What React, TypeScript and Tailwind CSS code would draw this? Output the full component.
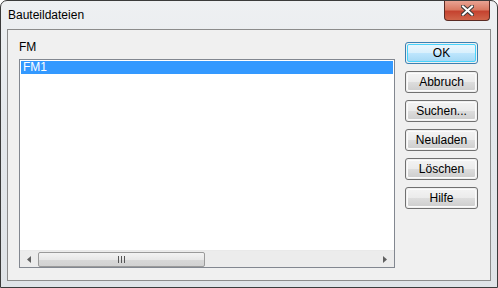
import React from "react";

const font = { fontFamily: '"Liberation Sans", Arial, sans-serif' };

function Btn({ label, def }: { label: string; def?: boolean }) {
  return (
    <div
      className={
        "h-[22px] w-[73px] rounded-[3px] border p-[1px] " +
        (def ? "border-[#3c7fb1]" : "border-[#707070]")
      }
    >
      <div
        className={
          "flex h-full w-full items-center justify-center rounded-[2px] text-[12px] leading-none text-black " +
          (def
            ? "border border-[#48d3fb] bg-[linear-gradient(#eaf6fd_0%,#d9f0fc_50%,#bee6fd_51%,#a7d9f5_100%)]"
            : "border border-[#fbfbfb] bg-[linear-gradient(#f2f2f2_0%,#ebebeb_50%,#dddddd_51%,#cfcfcf_100%)]")
        }
      >
        {label}
      </div>
    </div>
  );
}

export default function App() {
  return (
    <div className="w-[498px] h-[288px] bg-white" style={font}>
      <div className="flex h-full w-full flex-col rounded-t-[7px] border border-[#3b3b3b] bg-[linear-gradient(180deg,#eef0f2_0%,#e4e8ec_40%,#dfe3e7_100%)]">
        {/* title bar */}
        <div className="flex h-[28px] items-start">
          <div className="pl-[7px] pt-[7px] text-[12px] leading-[15px] text-black">Bauteildateien</div>
          <div className="ml-auto mr-[7px] flex h-[20px] w-[46px] items-center justify-center rounded-b-[4px] border border-t-0 border-[#5a2b24] bg-[linear-gradient(#e8a393_0%,#d97a63_45%,#c54330_55%,#d0654a_100%)]">
            <svg width="13" height="11" viewBox="0 0 13 11">
              <path
                d="M2 1.5 L11 9.5 M11 1.5 L2 9.5"
                stroke="#3a3a3a"
                strokeWidth="4"
                strokeLinecap="square"
              />
              <path
                d="M2 1.5 L11 9.5 M11 1.5 L2 9.5"
                stroke="#ffffff"
                strokeWidth="2"
                strokeLinecap="square"
              />
            </svg>
          </div>
        </div>
        {/* client */}
        <div className="mx-[6px] mb-[6px] flex flex-1 border border-[#8b8b8b] bg-[#f0f0f0]">
          <div className="flex flex-1 flex-col pl-[11px] pt-[10px] pb-[12px]">
            <div className="h-[15px] text-[12px] leading-[15px] text-black">FM</div>
            <div className="mt-[4px] flex flex-1 flex-col border border-[#828790] bg-white">
              <div className="flex flex-1 flex-col p-[1px]">
                <div className="h-[13px] bg-[#3399ff] pl-[2px] text-[12px] leading-[13px] text-white">FM1</div>
              </div>
              {/* scrollbar */}
              <div className="flex h-[17px] items-center border-t border-[#e9e9e9] bg-[#ececec]">
                <div className="flex h-full w-[18px] items-center justify-center">
                  <svg width="4" height="7" viewBox="0 0 4 7">
                    <path d="M4 0 L0 3.5 L4 7 Z" fill="#606060" />
                  </svg>
                </div>
                <div className="flex h-[15px] w-[167px] items-center justify-center rounded-[2px] border border-[#9a9a9a] bg-[linear-gradient(#f3f3f3_0%,#e8e8e8_50%,#d8d8d8_51%,#d2d2d2_100%)]">
                  <svg width="8" height="7" viewBox="0 0 8 7">
                    <path d="M0.5 0 V7 M3.5 0 V7 M6.5 0 V7" stroke="#555" strokeWidth="1" />
                  </svg>
                </div>
                <div className="flex-1" />
                <div className="flex h-full w-[18px] items-center justify-center">
                  <svg width="4" height="7" viewBox="0 0 4 7">
                    <path d="M0 0 L4 3.5 L0 7 Z" fill="#606060" />
                  </svg>
                </div>
              </div>
            </div>
          </div>
          <div className="ml-[10px] mr-[12px] flex flex-col gap-[7px] pt-[12px]">
            <Btn label="OK" def />
            <Btn label="Abbruch" />
            <Btn label="Suchen..." />
            <Btn label="Neuladen" />
            <Btn label="Löschen" />
            <Btn label="Hilfe" />
          </div>
        </div>
      </div>
    </div>
  );
}
